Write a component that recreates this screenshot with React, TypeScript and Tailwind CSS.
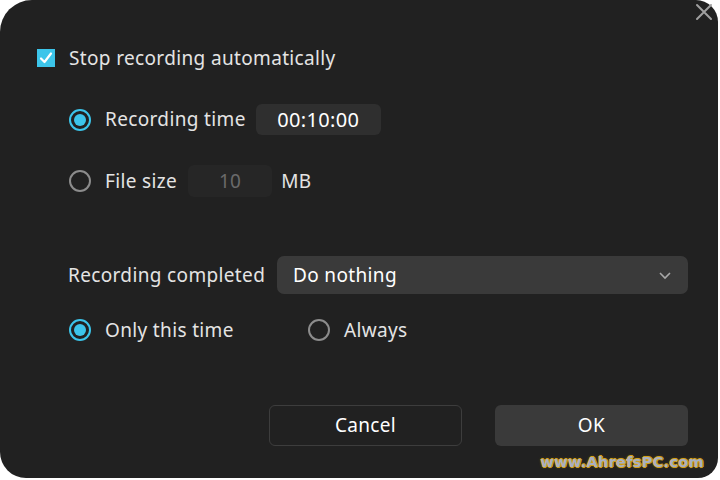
import React from "react";

function Radio({ checked }: { checked: boolean }) {
  return checked ? (
    <div className="w-[22px] h-[22px] rounded-full border-2 border-[#3cc5ea] flex items-center justify-center shrink-0">
      <div className="w-[12px] h-[12px] rounded-full bg-[#3cc5ea]" />
    </div>
  ) : (
    <div className="w-[22px] h-[22px] rounded-full border-2 border-[#8c8c8c] shrink-0" />
  );
}

export default function App() {
  return (
    <div className="w-[720px] h-[480px] bg-white overflow-hidden" style={{ fontFamily: '"Noto Sans", "Open Sans", sans-serif' }}>
      <div className="relative w-[718px] h-[478px] bg-[#212121] rounded-tl-[32px] rounded-tr-[22px] rounded-bl-[26px] rounded-br-[20px] text-[#e4e4e4] text-[19px] tracking-[0.35px] pl-[37px] pt-[49px] flex flex-col">
        <svg className="absolute top-[2px] right-[4px]" width="20" height="20" viewBox="0 0 20 20">
          <path d="M3 3 L17 17 M17 3 L3 17" stroke="#a0a0a0" strokeWidth="2" strokeLinecap="round" />
        </svg>

        <div className="flex items-center h-[18px] gap-[14px]">
          <div className="w-[18px] h-[18px] bg-[#3cc5ea] flex items-center justify-center shrink-0">
            <svg width="14" height="14" viewBox="0 0 14 14">
              <path d="M2 7.5 L5.5 11 L12 2.5" stroke="white" strokeWidth="2.2" fill="none" strokeLinecap="round" strokeLinejoin="round" />
            </svg>
          </div>
          <span>Stop recording automatically</span>
        </div>

        <div className="flex items-center ml-[32px] mt-[37px] h-[31px]">
          <Radio checked />
          <span className="ml-[14px]">Recording time</span>
          <div className="ml-[10px] w-[125px] h-[31px] rounded-[6px] bg-[#2f2f2f] flex items-center justify-center text-white text-[20px]">
            00:10:00
          </div>
        </div>

        <div className="flex items-center ml-[32px] mt-[30px] h-[32px]">
          <Radio checked={false} />
          <span className="ml-[14px]">File size</span>
          <div className="ml-[11px] w-[84px] h-[32px] rounded-[6px] bg-[#262626] flex items-center justify-center text-[#6a6a6a]">
            10
          </div>
          <span className="ml-[9px]">MB</span>
        </div>

        <div className="flex items-center mt-[59px] h-[38px] pr-[30px]">
          <span className="ml-[31px] whitespace-nowrap">Recording completed</span>
          <div className="ml-auto w-[411px] h-[38px] rounded-[7px] bg-[#3a3a3a] flex items-center pl-[16px] pr-[16px] text-white">
            <span className="flex-1">Do nothing</span>
            <svg width="14" height="10" viewBox="0 0 14 10">
              <path d="M2 3 L7 8 L12 3" stroke="#a8a8a8" strokeWidth="1.6" fill="none" />
            </svg>
          </div>
        </div>

        <div className="flex items-center ml-[32px] mt-[25px] h-[22px]">
          <Radio checked />
          <span className="ml-[14px] w-[203px] whitespace-nowrap">Only this time</span>
          <Radio checked={false} />
          <span className="ml-[14px]">Always</span>
        </div>

        <div className="flex justify-end gap-[33px] mt-[64px] pr-[30px]">
          <div className="w-[193px] h-[41px] rounded-[6px] border border-[#3d3d3d] flex items-center justify-center text-white">
            Cancel
          </div>
          <div className="w-[193px] h-[41px] rounded-[6px] bg-[#3a3a3a] flex items-center justify-center text-white">
            OK
          </div>
        </div>

        <div
          className="absolute right-[14px] bottom-[4px] font-bold text-[14.5px] text-[#a9b0c0] tracking-[0.3px] [text-shadow:1px_0_0_#d4a017,-1px_0_0_#d4a017,0_1px_0_#d4a017,0_-1px_0_#d4a017,0_0_3px_#8a6a10]"
          style={{ fontFamily: '"DejaVu Sans", sans-serif' }}
        >
          www.AhrefsPC.com
        </div>
      </div>
    </div>
  );
}
